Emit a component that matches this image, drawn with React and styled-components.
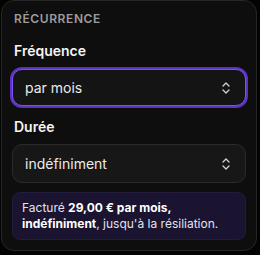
import React from "react";
import styled, { createGlobalStyle } from "styled-components";

const Global = createGlobalStyle`
  html, body { margin: 0; padding: 0; background: #030303; }
  body { font-family: Inter, "Noto Sans", sans-serif; -webkit-font-smoothing: antialiased; }
`;

const Card = styled.section`
  box-sizing: border-box;
  margin: 0 0 0 1px;
  width: 256px;
  height: 251px;
  background: #0e0e0e;
  border: 1px solid #262626;
  border-radius: 13px;
  padding: 10px 10px 0 10px;
  display: flex;
  flex-direction: column;
  & > * { flex-shrink: 0; }
`;

const Heading = styled.div`
  font-size: 12px;
  font-weight: 600;
  letter-spacing: 0.6px;
  color: #9c9c9c;
  line-height: 16px;
  padding-left: 2px;
`;

const Label = styled.div`
  font-size: 14px;
  font-weight: 600;
  color: #f4f4f4;
  line-height: 20px;
  margin-top: ${(p) => p.$top}px;
  padding-left: 2px;
`;

const Select = styled.div`
  box-sizing: border-box;
  height: ${(p) => (p.$focused ? 37 : 39)}px;
  margin-top: ${(p) => p.$top}px;
  display: flex;
  align-items: center;
  justify-content: space-between;
  padding: 0 15px 0 12px;
  border-radius: 10px;
  background: ${(p) => (p.$focused ? "#141414" : "#171717")};
  border: 1px solid ${(p) => (p.$focused ? "#7c52e8" : "#2b2b2b")};
  box-shadow: ${(p) => (p.$focused ? "0 0 0 2px #5b33c4" : "none")};
  color: #ececec;
  font-size: 14px;
`;

const Info = styled.div`
  box-sizing: border-box;
  margin-top: 9px;
  height: 48px;
  padding: 7px 9px;
  border-radius: 8px;
  background: #1a1430;
  border: 1px solid #231b3b;
  color: #e4e2ec;
  font-size: 12px;
  line-height: 16px;
  b { font-weight: 700; color: #ffffff; }
`;

const Chevrons = () => (
  <svg width="8" height="14" viewBox="0 0 8 14" fill="none" stroke="#d4d4d4" strokeWidth="1.3" strokeLinecap="round" strokeLinejoin="round">
    <path d="M1 5 L4 2 L7 5" />
    <path d="M1 9 L4 12 L7 9" />
  </svg>
);

export default function App() {
  return (
    <>
      <Global />
      <Card>
        <Heading>RÉCURRENCE</Heading>
        <Label $top={14}>Fréquence</Label>
        <Select $focused $top={8}>
          <span>par mois</span>
          <Chevrons />
        </Select>
        <Label $top={11}>Durée</Label>
        <Select $top={7}>
          <span>indéfiniment</span>
          <Chevrons />
        </Select>
        <Info>
          Facturé <b>29,00 € par mois,</b> <b>indéfiniment</b>, jusqu'à la résiliation.
        </Info>
      </Card>
    </>
  );
}
